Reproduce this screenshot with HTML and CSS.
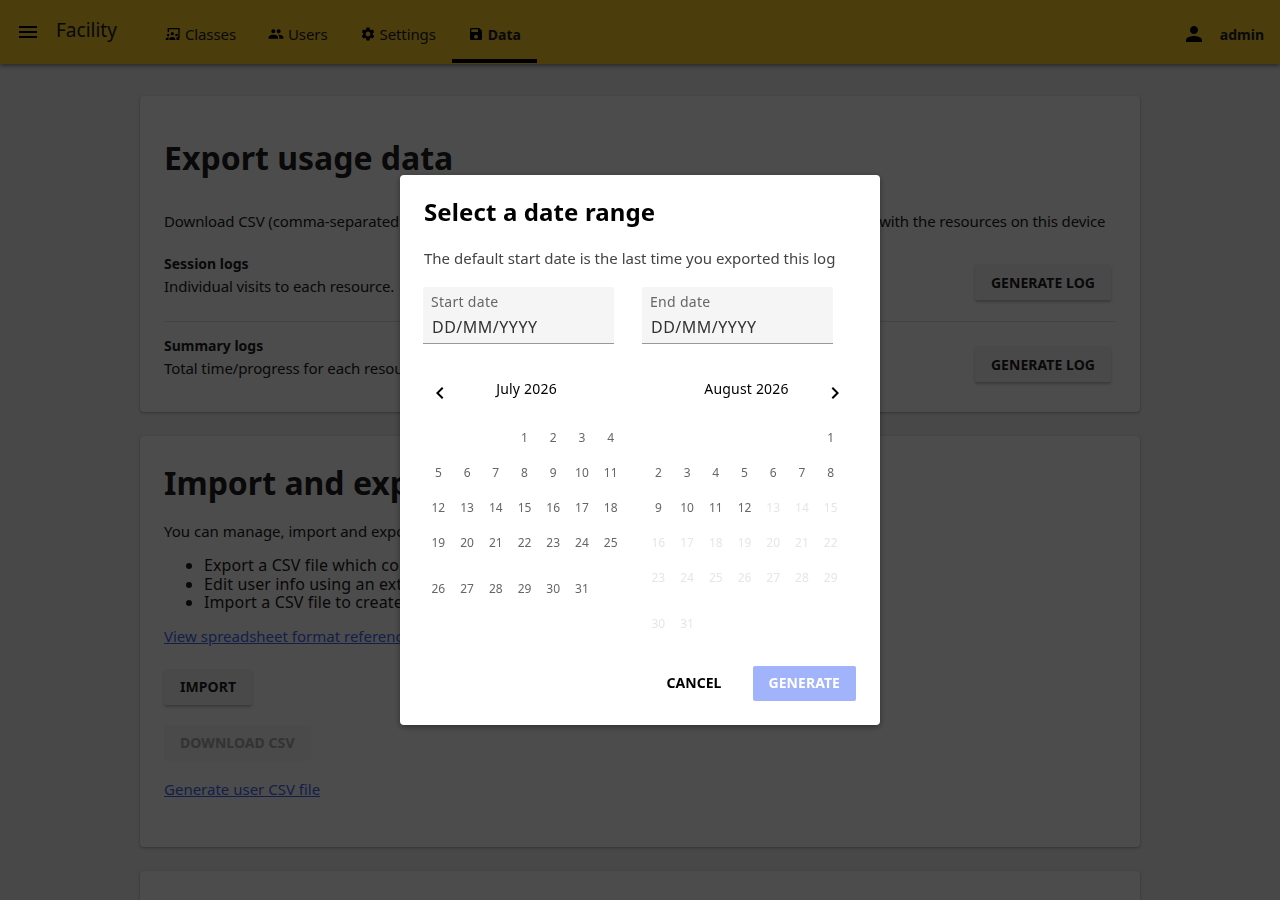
FILE: index.html
```html
<!DOCTYPE html>
<html lang="en">
<head>
    <meta charset="UTF-8">
    <meta name="viewport" content="width=device-width, initial-scale=1.0">
    <title>Facility - Data</title>
    <link rel="stylesheet" href="styles.css">
</head>
<body>
    <header class="appbar">
        <svg class="menu-icon" viewBox="0 0 24 24"><path d="M3 18h18v-2H3v2zm0-5h18v-2H3v2zm0-7v2h18V6H3z"/></svg>
        <span class="appbar-title">Facility</span>
        <nav class="tabs">
            <a class="tab">
                <svg class="tab-icon" viewBox="0 0 24 24"><path d="M4 3h18v15h-3v-2h1V5H6v4H4V3z"/><circle cx="11" cy="11.5" r="2.4"/><path d="M6.5 21v-1.6c0-1.9 3-2.9 4.5-2.9s4.500 1 4.500 2.900V21z"/><circle cx="4.800" cy="13.500" r="1.900"/><circle cx="17.200" cy="13.500" r="1.900"/><path d="M1 21v-1.400c0-1.500 2-2.400 3.800-2.400.5 0 1 .1 1.400.2-.6.500-1 1.200-1 2V21zM21.500 21v-1.400c0-1.500-2-2.400-3.800-2.400-.5 0-1 .1-1.400.2.600.5 1 1.200 1 2V21z"/></svg>
                Classes
            </a>
            <a class="tab">
                <svg class="tab-icon" viewBox="0 0 24 24"><path d="M16 11c1.66 0 2.99-1.34 2.99-3S17.66 5 16 5c-1.66 0-3 1.34-3 3s1.34 3 3 3zm-8 0c1.66 0 2.99-1.34 2.99-3S9.66 5 8 5C6.34 5 5 6.34 5 8s1.34 3 3 3zm0 2c-2.33 0-7 1.17-7 3.5V19h14v-2.5c0-2.33-4.67-3.5-7-3.5zm8 0c-.29 0-.62.02-.97.05 1.16.84 1.97 1.97 1.97 3.45V19h6v-2.5c0-2.33-4.67-3.5-7-3.5z"/></svg>
                Users
            </a>
            <a class="tab">
                <svg class="tab-icon" viewBox="0 0 24 24"><path d="M19.14 12.94c.04-.3.06-.61.06-.94 0-.32-.02-.64-.07-.94l2.03-1.58c.18-.14.23-.41.12-.61l-1.92-3.32c-.12-.22-.37-.29-.59-.22l-2.39.96c-.5-.38-1.03-.7-1.62-.94l-.36-2.54c-.04-.24-.24-.41-.48-.41h-3.84c-.24 0-.43.17-.47.41l-.36 2.54c-.59.24-1.13.57-1.62.94l-2.39-.96c-.22-.08-.47 0-.59.22L2.74 8.87c-.12.21-.08.47.12.61l2.03 1.58c-.05.3-.09.63-.09.94s.02.64.07.94l-2.03 1.58c-.18.14-.23.41-.12.61l1.92 3.32c.12.22.37.29.59.22l2.39-.96c.5.38 1.03.7 1.62.94l.36 2.54c.05.24.24.41.48.41h3.84c.24 0 .44-.17.47-.41l.36-2.54c.59-.24 1.13-.56 1.62-.94l2.39.96c.22.08.47 0 .59-.22l1.92-3.32c.12-.22.07-.47-.12-.61l-2.01-1.58zM12 15.6c-1.98 0-3.6-1.62-3.6-3.6s1.62-3.6 3.6-3.6 3.6 1.62 3.6 3.6-1.62 3.6-3.6 3.6z"/></svg>
                Settings
            </a>
            <a class="tab tab-active">
                <svg class="tab-icon" viewBox="0 0 24 24"><path d="M17 3H5c-1.11 0-2 .9-2 2v14c0 1.1.89 2 2 2h14c1.1 0 2-.9 2-2V7l-4-4zm-5 16c-1.66 0-3-1.34-3-3s1.34-3 3-3 3 1.34 3 3-1.34 3-3 3zm3-10H5V5h10v4z"/></svg>
                Data
            </a>
        </nav>
        <div class="user">
            <svg class="user-icon" viewBox="0 0 24 24"><path d="M12 12c2.21 0 4-1.79 4-4s-1.79-4-4-4-4 1.79-4 4 1.79 4 4 4zm0 2c-2.67 0-8 1.34-8 4v2h16v-2c0-2.66-5.33-4-8-4z"/></svg>
            <span>admin</span>
        </div>
    </header>

    <main class="content">
        <section class="card card-export">
            <h1>Export usage data</h1>
            <p class="intro">Download CSV (comma-separated values) files containing information about users and the interactions with the resources on this device</p>
            <div class="log-row log-row-first">
                <div>
                    <h2>Session logs</h2>
                    <p>Individual visits to each resource.</p>
                </div>
                <button class="btn btn-raised">Generate log</button>
            </div>
            <div class="log-row">
                <div>
                    <h2>Summary logs</h2>
                    <p>Total time/progress for each resource.</p>
                </div>
                <button class="btn btn-raised">Generate log</button>
            </div>
        </section>

        <section class="card card-import">
            <h1>Import and export users</h1>
            <p class="intro">You can manage, import and export users using a spreadsheet</p>
            <ul class="import-list">
                <li>Export a CSV file which contains all users</li>
                <li>Edit user info using an external spreadsheet</li>
                <li>Import a CSV file to create or update users</li>
            </ul>
            <a class="link link-format">View spreadsheet format reference</a>
            <div class="import-actions">
                <button class="btn btn-raised">Import</button>
                <button class="btn btn-disabled">Download CSV</button>
            </div>
            <a class="link">Generate user CSV file</a>
        </section>

        <section class="card card-empty"></section>
    </main>

    <div class="scrim">
        <div class="modal">
            <h1 class="modal-title">Select a date range</h1>
            <p class="modal-text">The default start date is the last time you exported this log</p>
            <div class="date-fields">
                <div class="date-field">
                    <span class="date-label">Start date</span>
                    <span class="date-value">DD/MM/YYYY</span>
                </div>
                <div class="date-field">
                    <span class="date-label">End date</span>
                    <span class="date-value">DD/MM/YYYY</span>
                </div>
            </div>
            <div class="calendars">
                <svg class="chevron chevron-prev" viewBox="0 0 24 24"><path d="M15.41 7.41L14 6l-6 6 6 6 1.41-1.41L10.83 12z"/></svg>
                <svg class="chevron chevron-next" viewBox="0 0 24 24"><path d="M10 6L8.59 7.41 13.17 12l-4.58 4.59L10 18l6-6z"/></svg>
                <div class="month">
                    <div class="month-name">July 2026</div>
                    <div class="week"><span></span><span></span><span></span><span>1</span><span>2</span><span>3</span><span>4</span></div>
                    <div class="week"><span>5</span><span>6</span><span>7</span><span>8</span><span>9</span><span>10</span><span>11</span></div>
                    <div class="week"><span>12</span><span>13</span><span>14</span><span>15</span><span>16</span><span>17</span><span>18</span></div>
                    <div class="week"><span>19</span><span>20</span><span>21</span><span>22</span><span>23</span><span>24</span><span>25</span></div>
                    <div class="week week-last"><span>26</span><span>27</span><span>28</span><span>29</span><span>30</span><span>31</span><span></span></div>
                </div>
                <div class="month">
                    <div class="month-name">August 2026</div>
                    <div class="week"><span></span><span></span><span></span><span></span><span></span><span></span><span>1</span></div>
                    <div class="week"><span>2</span><span>3</span><span>4</span><span>5</span><span>6</span><span>7</span><span>8</span></div>
                    <div class="week"><span>9</span><span>10</span><span>11</span><span>12</span><span class="off">13</span><span class="off">14</span><span class="off">15</span></div>
                    <div class="week"><span class="off">16</span><span class="off">17</span><span class="off">18</span><span class="off">19</span><span class="off">20</span><span class="off">21</span><span class="off">22</span></div>
                    <div class="week"><span class="off">23</span><span class="off">24</span><span class="off">25</span><span class="off">26</span><span class="off">27</span><span class="off">28</span><span class="off">29</span></div>
                    <div class="week week-last"><span class="off">30</span><span class="off">31</span><span></span><span></span><span></span><span></span><span></span></div>
                </div>
            </div>
            <div class="modal-actions">
                <button class="btn btn-flat">Cancel</button>
                <button class="btn btn-primary-off">Generate</button>
            </div>
        </div>
    </div>
</body>
</html>
```

FILE: styles.css
```css
* {
    box-sizing: border-box;
}
html, body {
    height: 900px;
    overflow: hidden;
}
body {
    margin: 0;
    background-color: #f0f0f0;
    color: #212121;
    font-family: "Noto Sans", sans-serif;
    font-size: 15px;
}
h1, h2, p, ul {
    margin: 0;
}

/* app bar */
.appbar {
    display: flex;
    align-items: flex-start;
    height: 64px;
    padding: 0 16px;
    background-color: #fbcb2b;
    box-shadow: 0 2px 4px rgba(0, 0, 0, 0.4);
}
.menu-icon {
    width: 24px;
    height: 24px;
    margin-top: 20px;
    flex: none;
}
.appbar-title {
    margin: 16px 0 0 16px;
    font-size: 19px;
    line-height: 28px;
}
.tabs {
    display: flex;
    margin-left: 32px;
}
.tab {
    display: flex;
    align-items: center;
    gap: 4px;
    height: 63px;
    padding: 9px 16px 0;
    border-bottom: 4px solid transparent;
    font-size: 15px;
    letter-spacing: -0.1px;
}
.tab-icon {
    width: 16px;
    height: 16px;
}
.tab-active {
    font-size: 14px;
    font-weight: 700;
    letter-spacing: 0;
    border-bottom-color: #000;
}
.user {
    display: flex;
    align-items: center;
    gap: 14px;
    height: 68px;
    margin-left: auto;
    font-size: 14px;
    font-weight: 700;
}
.user-icon {
    width: 24px;
    height: 24px;
}

/* cards */
.content {
    display: flex;
    flex-direction: column;
    gap: 24px;
    width: 1000px;
    margin: 32px auto 0;
}
.card {
    padding: 40px 24px 0;
    background-color: #fff;
    border-radius: 4px;
    box-shadow: 0 1px 3px rgba(0, 0, 0, 0.3);
}
.card h1 {
    font-size: 32px;
    line-height: 44px;
}
.card-export {
    height: 316px;
}
.card-import {
    height: 411px;
    padding-top: 25px;
}
.card-empty {
    height: 80px;
}
.intro {
    line-height: 20px;
}
.card-export .intro {
    margin-top: 31px;
    letter-spacing: -0.12px;
    white-space: nowrap;
}
.card-import .intro {
    margin-top: 16px;
}
.log-row {
    display: flex;
    justify-content: space-between;
    align-items: flex-start;
    padding: 12px 5px 0 0;
    line-height: 23px;
}
.log-row p {
    letter-spacing: -0.1px;
}
.log-row-first {
    padding-top: 21px;
    padding-bottom: 21px;
    border-bottom: 1px solid #e0e0e0;
}
.log-row h2 {
    font-size: 14px;
    line-height: 23px;
}
.log-row .btn {
    margin-top: 12px;
}
.import-list {
    margin-top: 15px;
    padding-left: 40px;
    font-size: 16px;
    line-height: 18.5px;
    letter-spacing: 0.12px;
}
.link {
    display: inline-block;
    color: #4368f5;
    text-decoration: underline;
    line-height: 20px;
}
.link-format {
    margin-top: 14px;
}
.import-actions {
    display: flex;
    flex-direction: column;
    align-items: flex-start;
    gap: 20px;
    margin: 23px 0 18px;
}

/* buttons */
.btn {
    height: 36px;
    padding: 0 16px;
    border: none;
    border-radius: 2px;
    font-family: inherit;
    font-size: 14px;
    font-weight: 700;
    letter-spacing: 0.06px;
    text-transform: uppercase;
    color: #212121;
}
.btn-raised {
    background-color: #f5f5f5;
    box-shadow: 0 2px 3px rgba(0, 0, 0, 0.25);
}
.btn-disabled {
    background-color: #f7f7f7;
    color: #aaa;
}
.btn-flat {
    background-color: transparent;
    color: #000;
}
.btn-primary-off {
    height: 35px;
    background-color: #a1b3fa;
    color: #fff;
}

/* date range modal */
.scrim {
    position: fixed;
    top: 0;
    left: 0;
    width: 100%;
    height: 100%;
    display: flex;
    justify-content: center;
    align-items: center;
    background-color: rgba(0, 0, 0, 0.7);
}
.modal {
    width: 480px;
    height: 550px;
    padding: 23px 24px 24px;
    background-color: #fff;
    color: #000;
    border-radius: 4px;
    box-shadow: 0 2px 6px rgba(0, 0, 0, 0.4);
}
.modal-title {
    font-size: 24px;
    line-height: 28px;
    letter-spacing: 0.12px;
}
.modal-text {
    margin-top: 22px;
    line-height: 20px;
    color: #444;
}
.date-fields {
    display: flex;
    gap: 28px;
    margin: 19px 0 0 -1px;
}
.date-field {
    display: flex;
    flex-direction: column;
    width: 191px;
    height: 57px;
    padding: 5px 8px 0;
    background-color: #f5f5f5;
    border-bottom: 1px solid #999;
    border-radius: 2px 2px 0 0;
}
.date-label {
    font-size: 14px;
    line-height: 20px;
    letter-spacing: 0.3px;
    color: #666;
}
.date-value {
    margin: 4px 0 0 1px;
    font-size: 16px;
    line-height: 22px;
    letter-spacing: 0.5px;
    color: #333;
}
.calendars {
    position: relative;
    display: flex;
    gap: 19px;
    margin-top: 33px;
    height: 288px;
}
.chevron {
    position: absolute;
    top: 4px;
    width: 24px;
    height: 24px;
}
.chevron-prev {
    left: 4px;
}
.chevron-next {
    right: 9px;
}
.month {
    width: 201px;
}
.month-name {
    margin-left: 4px;
    padding-top: 1px;
    height: 43px;
    text-align: center;
    font-size: 14px;
    line-height: 22px;
    letter-spacing: 0.2px;
}
.week {
    display: grid;
    grid-template-columns: repeat(7, 1fr);
    height: 35px;
    font-size: 12px;
    line-height: 35px;
    text-align: center;
    color: #666;
}
.week-last {
    margin-top: 11px;
}
.off {
    color: #e6e6e6;
}
.modal-actions {
    display: flex;
    justify-content: flex-end;
    align-items: center;
    gap: 15px;
}
.modal-actions .btn {
    padding-bottom: 1px;
}
```
